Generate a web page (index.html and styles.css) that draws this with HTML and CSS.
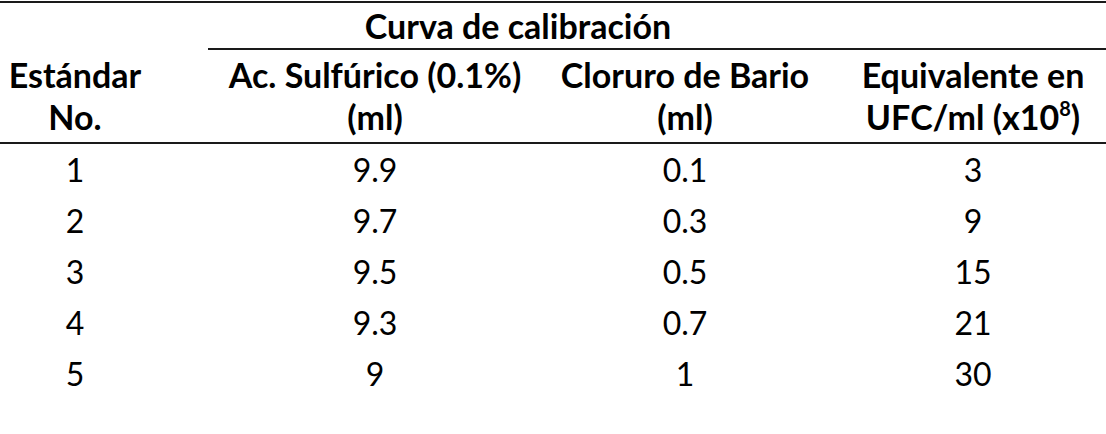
FILE: index.html
```html
<!DOCTYPE html>
<html lang="es">
<head>
<meta charset="utf-8">
<title>Curva de calibración</title>
<link rel="stylesheet" href="styles.css">
</head>
<body>
<table class="calib">
  <colgroup>
    <col class="w1"><col class="w2"><col class="w3"><col class="w4">
  </colgroup>
  <thead>
    <tr class="r-group">
      <th class="c1"></th>
      <th class="group" colspan="2">Curva de calibración</th>
      <th class="group c4"></th>
    </tr>
    <tr class="r-head">
      <th class="c1">Estándar<br>No.</th>
      <th>Ac. Sulfúrico (0.1%)<br>(ml)</th>
      <th>Cloruro de Bario<br>(ml)</th>
      <th class="c4">Equivalente en<br>UFC/ml (x10<sup>8</sup>)</th>
    </tr>
  </thead>
  <tbody>
    <tr><td class="c1">1</td><td>9.9</td><td>0.1</td><td class="c4">3</td></tr>
    <tr><td class="c1">2</td><td>9.7</td><td>0.3</td><td class="c4">9</td></tr>
    <tr><td class="c1">3</td><td>9.5</td><td>0.5</td><td class="c4">15</td></tr>
    <tr><td class="c1">4</td><td>9.3</td><td>0.7</td><td class="c4">21</td></tr>
    <tr><td class="c1">5</td><td>9</td><td>1</td><td class="c4">30</td></tr>
  </tbody>
</table>
</body>
</html>
```

FILE: styles.css
```css
html, body {
  margin: 0;
  padding: 0;
  background: #ffffff;
}

body {
  padding-top: 1px;
  font-family: Lato, "Open Sans", sans-serif;
  color: #000000;
}

.calib {
  width: 1106px;
  table-layout: fixed;
  border-collapse: separate;
  border-spacing: 0;
  border-top: 2px solid #1a1a1a;
}

.w1 { width: 208px; }
.w2 { width: 334px; }
.w3 { width: 286px; }
.w4 { width: 278px; }

.calib th,
.calib td {
  padding: 0;
  text-align: center;
  vertical-align: middle;
}

.calib th {
  font-weight: 700;
  font-size: 34px;
  line-height: 42px;
}

.calib td {
  font-weight: 400;
  font-size: 32px;
  line-height: 51px;
  height: 51px;
}

.calib .c1 { padding-right: 58px; }
.calib .c4 { padding-left: 12px; }

.r-group th {
  height: 45px;
  line-height: 45px;
}

.r-group .group {
  border-bottom: 2px solid #1a1a1a;
}

.r-head th {
  height: 92px;
  border-bottom: 2px solid #1a1a1a;
}

sup {
  font-size: 20px;
  line-height: 0;
  vertical-align: 14px;
}
```
